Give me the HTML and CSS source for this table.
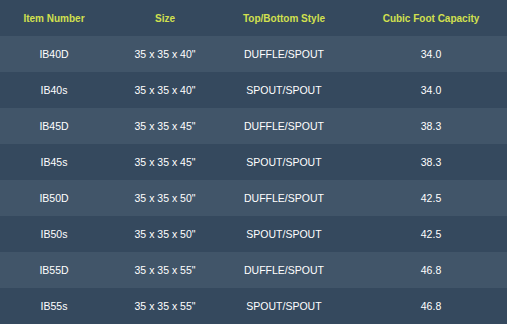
FILE: index.html
```html
<!DOCTYPE html>
<html>
<head>
<meta charset="utf-8">
<link rel="stylesheet" href="styles.css">
</head>
<body>
<table class="spec">
  <colgroup>
    <col class="c1"><col class="c2"><col class="c3"><col class="c4">
  </colgroup>
  <thead>
    <tr><th>Item Number</th><th>Size</th><th>Top/Bottom Style</th><th>Cubic Foot Capacity</th></tr>
  </thead>
  <tbody>
    <tr><td>IB40D</td><td>35 x 35 x 40"</td><td>DUFFLE/SPOUT</td><td>34.0</td></tr>
    <tr><td>IB40s</td><td>35 x 35 x 40"</td><td>SPOUT/SPOUT</td><td>34.0</td></tr>
    <tr><td>IB45D</td><td>35 x 35 x 45"</td><td>DUFFLE/SPOUT</td><td>38.3</td></tr>
    <tr><td>IB45s</td><td>35 x 35 x 45"</td><td>SPOUT/SPOUT</td><td>38.3</td></tr>
    <tr><td>IB50D</td><td>35 x 35 x 50"</td><td>DUFFLE/SPOUT</td><td>42.5</td></tr>
    <tr><td>IB50s</td><td>35 x 35 x 50"</td><td>SPOUT/SPOUT</td><td>42.5</td></tr>
    <tr><td>IB55D</td><td>35 x 35 x 55"</td><td>DUFFLE/SPOUT</td><td>46.8</td></tr>
    <tr><td>IB55s</td><td>35 x 35 x 55"</td><td>SPOUT/SPOUT</td><td>46.8</td></tr>
  </tbody>
</table>
</body>
</html>
```
FILE: styles.css
```css
html, body {
  margin: 0;
  padding: 0;
  overflow: hidden;
  background: #35495e;
}
.spec {
  width: 516px;
  border-collapse: collapse;
  table-layout: fixed;
  font-family: "Liberation Sans", Arial, sans-serif;
  font-size: 10px;
}
.c1 { width: 108px; }
.c2 { width: 114px; }
.c3 { width: 124px; }
.c4 { width: 170px; }
.spec th, .spec td {
  height: 36px;
  padding: 0;
  text-align: center;
  vertical-align: middle;
}
.spec th {
  color: #d2e04e;
  font-weight: bold;
  background: #35495e;
}
.spec td {
  color: #ffffff;
  font-size: 10.5px;
}
.spec tbody tr:nth-child(odd) td { background: #415569; }
.spec tbody tr:nth-child(even) td { background: #35495e; }
```
